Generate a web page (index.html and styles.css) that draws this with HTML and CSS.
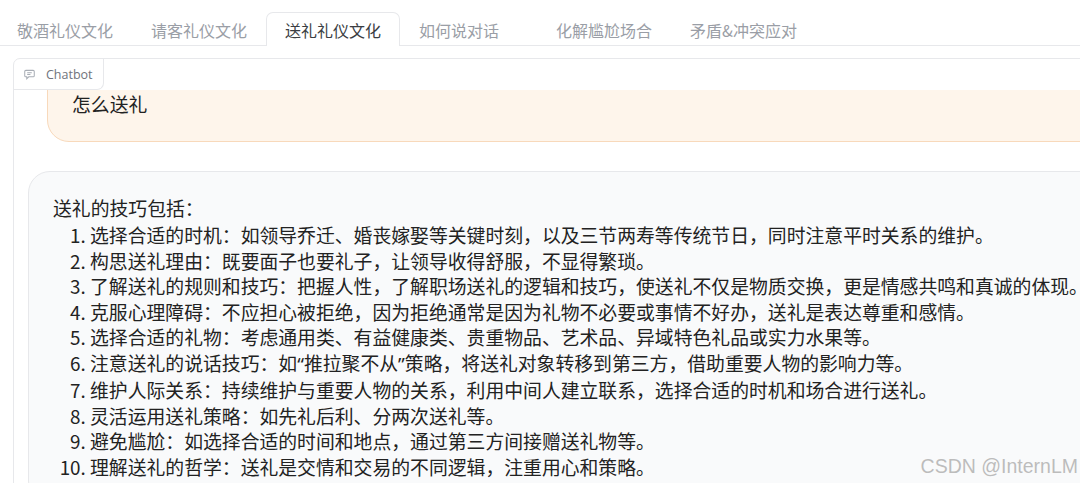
FILE: index.html
```html
<!DOCTYPE html>
<html lang="zh-CN">

<head>
    <meta charset="UTF-8">
    <meta name="viewport" content="width=device-width, initial-scale=1.0">
    <title>InternLM 礼仪助手</title>
    <link rel="stylesheet" href="styles.css">
</head>

<body>
    <!-- 标签栏 -->
    <div class="tab_nav">
        <button class="tab">敬酒礼仪文化</button>
        <button class="tab">请客礼仪文化</button>
        <button class="tab tab_active">送礼礼仪文化</button>
        <button class="tab tab_wide">如何说对话</button>
        <button class="tab">化解尴尬场合</button>
        <button class="tab">矛盾&amp;冲突应对</button>
    </div>
    <!-- 对话框 -->
    <div class="chat_box">
        <div class="chat_label">
            <svg width="11" height="11" viewBox="0 0 12 12" fill="none" stroke="#a8adb5" stroke-width="1.1">
                <path d="M2 1.5h8a1.2 1.2 0 0 1 1.2 1.2v4.6a1.2 1.2 0 0 1-1.2 1.2H5.2L3 10.6V8.5H2A1.2 1.2 0 0 1 .8 7.3V2.7A1.2 1.2 0 0 1 2 1.5z" />
                <path d="M3.5 4h5M3.5 6h3.5" />
            </svg>
            <span>Chatbot</span>
        </div>
        <div class="chat_msgs">
            <div class="msg msg_user">怎么送礼</div>
            <div class="msg msg_bot">
                <p>送礼的技巧包括：</p>
                <ol>
                    <li>选择合适的时机：如领导乔迁、婚丧嫁娶等关键时刻，以及三节两寿等传统节日，同时注意平时关系的维护。</li>
                    <li>构思送礼理由：既要面子也要礼子，让领导收得舒服，不显得繁琐。</li>
                    <li>了解送礼的规则和技巧：把握人性，了解职场送礼的逻辑和技巧，使送礼不仅是物质交换，更是情感共鸣和真诚的体现。</li>
                    <li>克服心理障碍：不应担心被拒绝，因为拒绝通常是因为礼物不必要或事情不好办，送礼是表达尊重和感情。</li>
                    <li>选择合适的礼物：考虑通用类、有益健康类、贵重物品、艺术品、异域特色礼品或实力水果等。</li>
                    <li>注意送礼的说话技巧：如<span class="quote">“</span>推拉聚不从<span class="quote">”</span>策略，将送礼对象转移到第三方，借助重要人物的影响力等。</li>
                    <li>维护人际关系：持续维护与重要人物的关系，利用中间人建立联系，选择合适的时机和场合进行送礼。</li>
                    <li>灵活运用送礼策略：如先礼后利、分两次送礼等。</li>
                    <li>避免尴尬：如选择合适的时间和地点，通过第三方间接赠送礼物等。</li>
                    <li>理解送礼的哲学：送礼是交情和交易的不同逻辑，注重用心和策略。</li>
                </ol>
            </div>
        </div>
    </div>
    <div class="watermark">CSDN @InternLM</div>
</body>

</html>
```

FILE: styles.css
```css
* {
    padding: 0;
    margin: 0;
    box-sizing: border-box;
}

body {
    width: 1080px;
    height: 483px;
    overflow: hidden;
    position: relative;
    background: #FFFFFF;
    font-family: "Noto Sans CJK SC", sans-serif;
    color: #222222;
}

/* 标签栏 */
.tab_nav {
    display: flex;
    margin-left: -2px;
    padding-top: 12px;
    border-bottom: 1px solid #e7e8eb;
}

.tab {
    height: 34px;
    padding: 1px 18px 0;
    margin-bottom: -1px;
    border: 1px solid transparent;
    border-bottom: none;
    border-radius: 7px 7px 0 0;
    background: none;
    font-family: "Noto Sans CJK SC", sans-serif;
    font-size: 16px;
    color: #9a9ea6;
}

.tab_wide {
    padding-right: 37px;
}

.tab_active {
    background: #FFFFFF;
    border-color: #e7e8eb;
    color: #3a3d42;
}

/* 对话框 */
.chat_box {
    width: 1200px;
    margin: 12px 0 0 13px;
    border: 1px solid #e7e8eb;
    border-radius: 7px;
}

.chat_label {
    display: inline-flex;
    align-items: center;
    gap: 11px;
    height: 31px;
    padding: 0 10px;
    border-right: 1px solid #e7e8eb;
    border-bottom: 1px solid #e7e8eb;
    border-radius: 0 0 7px 0;
    font-family: "Open Sans", sans-serif;
    font-size: 12.5px;
    color: #70747c;
}

.chat_label>svg {
    margin-top: 1px;
}

.chat_msgs {
    height: 400px;
    overflow: hidden;
}

.msg {
    font-size: 18.84px;
    line-height: 25.5px;
    border-radius: 22px;
}

.msg_user {
    margin: -24px 0 0 33px;
    padding: 24px;
    background: #fef5eb;
    border: 1px solid #f8d9bb;
}

.msg_bot {
    margin: 29px 0 0 14px;
    padding: 23px 24px;
    background: #f9fafb;
    border: 1px solid #e7e8eb;
}

.msg_bot>p {
    margin-bottom: 2px;
}

.msg_bot>ol {
    padding-left: 37px;
}

.quote {
    font-family: "Noto Sans", sans-serif;
}

.watermark {
    position: absolute;
    right: 2px;
    bottom: 5px;
    font-family: "Liberation Sans", Arial, sans-serif;
    font-size: 19.5px;
    color: #bcbcbc;
    text-shadow: 0 0 1px #ffffff;
}
```
